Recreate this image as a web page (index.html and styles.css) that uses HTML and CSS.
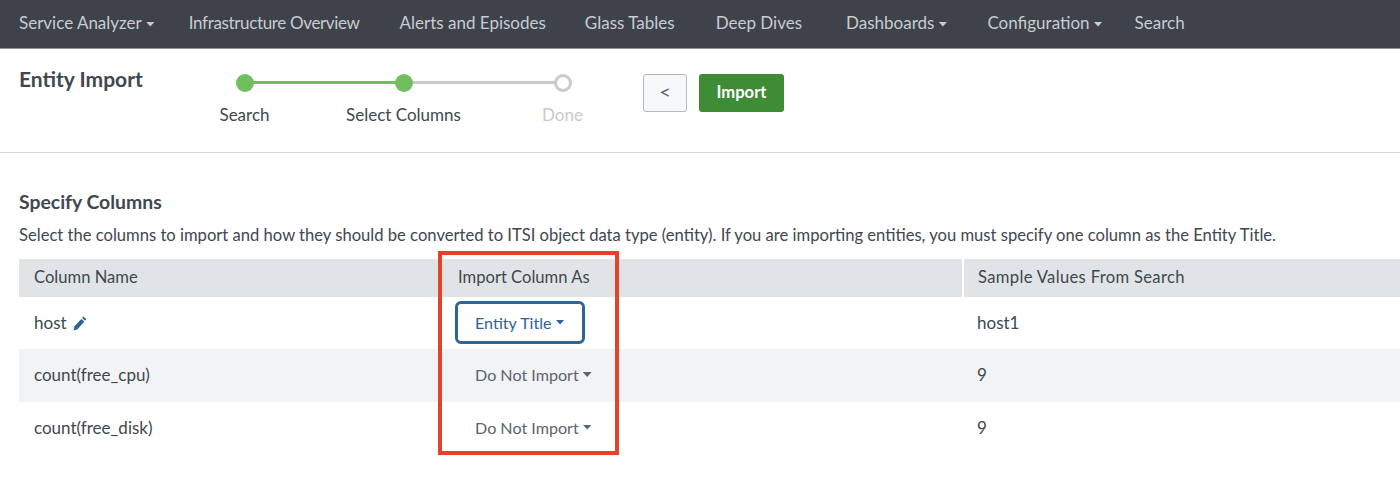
FILE: index.html
```html
<!DOCTYPE html>
<html lang="en">
<head>
    <meta charset="UTF-8">
    <meta name="viewport" content="width=device-width, initial-scale=1.0">
    <title>Entity Import</title>
    <link rel="stylesheet" href="styles.css">
</head>
<body>
    <nav class="nav">
        <a class="nav-item nav-service">Service Analyzer<span class="caret"></span></a>
        <a class="nav-item nav-infra">Infrastructure Overview</a>
        <a class="nav-item nav-alerts">Alerts and Episodes</a>
        <a class="nav-item nav-glass">Glass Tables</a>
        <a class="nav-item nav-deep">Deep Dives</a>
        <a class="nav-item nav-dash">Dashboards<span class="caret"></span></a>
        <a class="nav-item nav-config">Configuration<span class="caret"></span></a>
        <a class="nav-item">Search</a>
    </nav>

    <header class="header">
        <h1 class="title">Entity Import</h1>
        <div class="stepper">
            <div class="step">
                <span class="dot"></span>
                <span class="step-label">Search</span>
            </div>
            <div class="step step-active">
                <span class="dot"></span>
                <span class="step-label">Select Columns</span>
            </div>
            <div class="step step-todo">
                <span class="dot"></span>
                <span class="step-label">Done</span>
            </div>
        </div>
        <button class="btn btn-back" type="button">&lt;</button>
        <button class="btn btn-import" type="button">Import</button>
    </header>

    <main class="content">
        <h2 class="section-title">Specify Columns</h2>
        <p class="section-text">Select the columns to import and how they should be converted to ITSI object data type (entity). If you are importing entities, you must specify one column as the Entity Title.</p>

        <div class="table-wrap">
            <table class="table">
                <thead>
                    <tr>
                        <th class="col-name">Column Name</th>
                        <th class="col-import">Import Column As</th>
                        <th class="col-sample">Sample Values From Search</th>
                    </tr>
                </thead>
                <tbody>
                    <tr>
                        <td class="cell-name">host
                            <svg class="pencil" width="14" height="15" viewBox="0 0 14 15"><path d="M10.4 .6l3 2.6-1.3 1.5-3-2.6zM8.3 3l3 2.6-6.7 7.6-3.9 1.4.6-4z" fill="#2f6497"/></svg>
                        </td>
                        <td><a class="select select-on">Entity Title<span class="caret"></span></a></td>
                        <td>host1</td>
                    </tr>
                    <tr>
                        <td class="cell-name">count(free_cpu)</td>
                        <td><a class="select">Do Not Import<span class="caret"></span></a></td>
                        <td>9</td>
                    </tr>
                    <tr>
                        <td class="cell-name">count(free_disk)</td>
                        <td><a class="select">Do Not Import<span class="caret"></span></a></td>
                        <td>9</td>
                    </tr>
                </tbody>
            </table>
            <div class="highlight"></div>
        </div>
    </main>
</body>
</html>
```

FILE: styles.css
```css
html, body {
    margin: 0;
    padding: 0;
}
body {
    height: 491px;
    overflow: hidden;
    background-color: white;
    color: #40474f;
    font-family: Lato, "Open Sans", sans-serif;
    font-size: 17px;
}
.nav {
    display: flex;
    align-items: center;
    height: 44px;
    padding-left: 19px;
    padding-bottom: 4px;
    background-color: #3d424b;
    border-bottom: 1px solid #8f949a;
    color: #c9ccd0;
}
.nav-item {
    white-space: nowrap;
}
.nav-service { margin-right: 34px; }
.nav-infra { margin-right: 40px; letter-spacing: -0.35px; }
.nav-alerts { margin-right: 39px; }
.nav-glass { margin-right: 41px; }
.nav-deep { margin-right: 44px; }
.nav-dash { margin-right: 40px; }
.nav-config { margin-right: 32px; }
.caret {
    display: inline-block;
    width: 9px;
    height: 5px;
    margin-left: 4px;
    vertical-align: 2px;
    background-color: currentColor;
    clip-path: polygon(0 0, 100% 0, 50% 100%);
}
.header {
    display: flex;
    align-items: flex-start;
    height: 103px;
    padding-left: 19px;
    border-bottom: 1px solid #d5d7da;
}
.title {
    width: 146px;
    margin: 17px 0 0;
    font-size: 21px;
    font-weight: 700;
}
.stepper {
    display: flex;
    margin: 25px 0 0 0;
}
.step {
    position: relative;
    display: flex;
    flex-direction: column;
    align-items: center;
    width: 159px;
}
.step:not(:last-child)::after {
    content: "";
    position: absolute;
    left: 50%;
    top: 7px;
    width: 159px;
    height: 3px;
    background-color: #6fbf5f;
}
.step-active:not(:last-child)::after {
    background-color: #c8cacd;
}
.dot {
    position: relative;
    z-index: 1;
    width: 18px;
    height: 18px;
    border-radius: 50%;
    background-color: #6fbf5f;
}
.step-todo .dot {
    box-sizing: border-box;
    border: 3px solid #c8cacd;
    background-color: white;
}
.step-label {
    margin-top: 12px;
    white-space: nowrap;
}
.step-todo .step-label {
    color: #c8cacd;
}
.btn {
    height: 38px;
    border-radius: 3px;
    font-family: inherit;
    font-size: 16.6px;
    margin-top: 25px;
    padding: 0 0 2px;
}
.btn-back {
    width: 44px;
    margin-left: 1px;
    padding-bottom: 4px;
    background-color: #f7f8fa;
    border: 1px solid #b6b8bb;
    color: #5c6773;
    font-size: 20px;
}
.btn-import {
    width: 85px;
    margin-left: 12px;
    background-color: #3e8c35;
    border: none;
    color: white;
    font-weight: 700;
}
.content {
    padding: 38px 0 0 19px;
}
.section-title {
    margin: 0;
    font-size: 19.4px;
    font-weight: 700;
    line-height: 22px;
}
.section-text {
    margin: 12px 0 0;
    font-size: 16.6px;
    line-height: 20px;
    white-space: nowrap;
}
.table-wrap {
    position: relative;
    margin-top: 14px;
}
.table {
    width: 1381px;
    border-collapse: collapse;
    table-layout: fixed;
}
.table th {
    box-sizing: border-box;
    height: 38px;
    padding: 0 14px 2px;
    background-color: #e1e4e7;
    font-size: 16.6px;
    font-weight: 400;
    text-align: left;
}
.table th.col-name {
    width: 425px;
    padding-left: 15px;
}
.table th.col-import {
    width: 519px;
    border-right: 2px solid white;
}
.table th.col-sample {
    letter-spacing: 0.33px;
}
.table td {
    box-sizing: border-box;
    height: 52px;
    padding: 0 14px 2px;
}
.table td.cell-name {
    padding-left: 15px;
}
.table tbody tr:nth-child(2) td {
    height: 53px;
    background-color: #f2f3f5;
}
.pencil {
    margin-left: 2px;
    vertical-align: -2px;
}
.select {
    display: inline-flex;
    align-items: center;
    box-sizing: border-box;
    height: 43px;
    padding: 0 17px;
    color: #5c6470;
    font-size: 16.1px;
}
.select-on {
    margin-left: -3px;
    border: 3px solid #2f6497;
    border-radius: 6px;
    color: #2f6497;
}
.highlight {
    position: absolute;
    left: 419px;
    top: -8px;
    width: 173px;
    height: 196px;
    border: 4px solid #e4432b;
}
```
